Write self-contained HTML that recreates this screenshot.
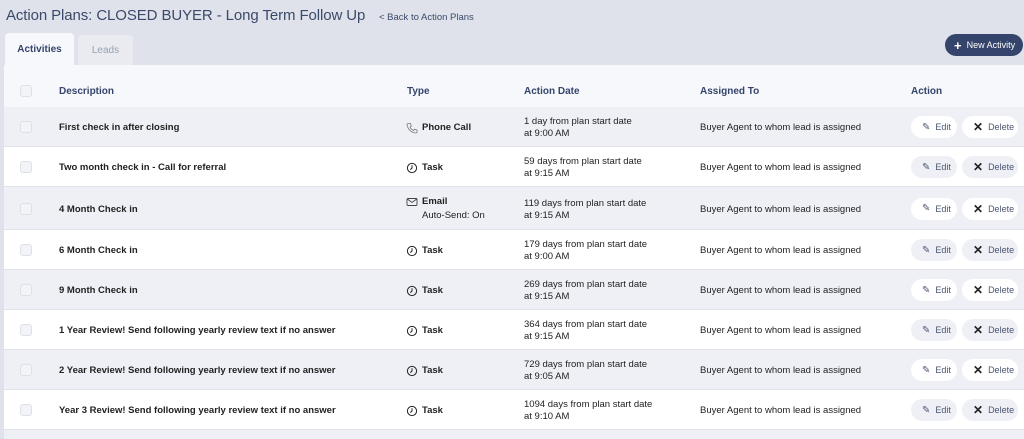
<!DOCTYPE html>
<html><head><style>
*{box-sizing:border-box;margin:0;padding:0}
body{width:1024px;height:439px;overflow:hidden;background:#dfe2ea;font-family:"Liberation Sans",sans-serif;position:relative;color:#222}
.title{position:absolute;left:6px;top:7px;font-size:15px;color:#3b4a6b;letter-spacing:-0.1px}
.back{position:absolute;left:379px;top:12px;font-size:9.5px;color:#3b4a6b}
.tab{position:absolute;top:33px;height:32px;font-size:10px;font-weight:bold;display:flex;align-items:center;justify-content:center;border-radius:4px 4px 0 0}
.new{position:absolute;left:945px;top:34px;width:78px;height:22px;background:#34446a;border-radius:11px;color:#fff;font-size:9px;display:flex;align-items:center;padding-left:9px;white-space:nowrap}
.tbl{position:absolute;left:4px;top:65px;width:1020px;height:374px;background:#eef0f6}
.row{position:absolute;left:0;width:1020px;border-bottom:1px solid #e0e3ea;font-size:9.5px}
.row>*{position:absolute}
.cb{left:16px;width:12px;height:12px;border:1px solid #dde0e7;border-radius:3px;background:#f3f4f8}
.hd{font-weight:bold;color:#34446a;font-size:10px}
.desc{left:55px;font-weight:bold}
.ic{left:402px;width:12px;height:12px}
.ty{left:418px;font-weight:bold}
.dt{left:520px;line-height:12px}
.as{left:696px}
.btn{height:22px;border-radius:11px;font-size:9px;color:#4a5570;display:flex;align-items:center;gap:5px;padding-left:11px}
</style></head><body>
<div class="title">Action Plans: CLOSED BUYER - Long Term Follow Up</div>
<div class="back">&lt; Back to Action Plans</div>
<div class="tab" style="left:5px;width:69px;background:#f7f8fc;color:#34446a">Activities</div>
<div class="tab" style="left:78px;width:55px;background:#e9ebf0;color:#98a0b0;top:35px;height:30px;font-weight:normal">Leads</div>
<div class="new"><span style="font-size:13px;margin-right:5px;font-weight:bold">+</span>New Activity</div>
<div class="tbl">
<div class="row" style="top:0;height:42px;background:#f7f8fc;border:none">
<div class="cb" style="top:20px"></div>
<div class="hd" style="left:55px;top:21px">Description</div>
<div class="hd" style="left:403px;top:21px">Type</div>
<div class="hd" style="left:520px;top:21px">Action Date</div>
<div class="hd" style="left:696px;top:21px">Assigned To</div>
<div class="hd" style="left:907px;top:21px">Action</div>
</div>
<div id="rows"></div>
</div>
<script>
var d=[["First check in after closing","Phone Call","1 day from plan start date","at 9:00 AM",40],
["Two month check in - Call for referral","Task","59 days from plan start date","at 9:15 AM",40],
["4 Month Check in","Email","119 days from plan start date","at 9:15 AM",43],
["6 Month Check in","Task","179 days from plan start date","at 9:00 AM",40],
["9 Month Check in","Task","269 days from plan start date","at 9:15 AM",40],
["1 Year Review! Send following yearly review text if no answer","Task","364 days from plan start date","at 9:15 AM",40],
["2 Year Review! Send following yearly review text if no answer","Task","729 days from plan start date","at 9:05 AM",40],
["Year 3 Review! Send following yearly review text if no answer","Task","1094 days from plan start date","at 9:10 AM",40]];
var y=42,h="";
var icons={"Task":'<svg class="ic" viewBox="0 0 12 12"><circle cx="6" cy="6" r="4.6" fill="none" stroke="#222" stroke-width="1"/><path d="M6 3.3V6L4.3 7.6" fill="none" stroke="#222" stroke-width="1"/></svg>',
"Phone Call":'<svg class="ic" viewBox="0 0 12 12"><path d="M2.5 1.5L4.5 1.5 5.3 4 4 5C4.8 6.8 5.8 7.8 7.5 8.5L8.5 7.2 11 8V10C11 10.8 10.3 11 9.5 11 5 10.5 1.5 7 1 2.5 1 1.8 1.5 1.5 2.5 1.5Z" fill="none" stroke="#777" stroke-width=".8"/></svg>',
"Email":'<svg class="ic" viewBox="0 0 12 12"><rect x="1" y="2.5" width="10" height="7" rx="1" fill="none" stroke="#444" stroke-width=".9"/><path d="M1.3 3L6 6.5 10.7 3" fill="none" stroke="#444" stroke-width=".9"/></svg>'};
d.forEach(function(r,i){var H=r[4],odd=i%2==0,bg=odd?"#eef0f6":"#fff",bb=odd?"#fff":"#eef0f6",c=H/2+1;
var ty=r[1]=="Email"?icons.Email.replace('class="ic"','class="ic" style="top:'+(c-14)+'px"')+'<div class="ty" style="top:'+(c-14)+'px">Email</div><div style="left:418px;top:'+(c)+'px">Auto-Send: On</div>'
:icons[r[1]].replace('class="ic"','class="ic" style="top:'+(c-6)+'px"')+'<div class="ty" style="top:'+(c-6)+'px">'+r[1]+'</div>';
h+='<div class="row" style="top:'+y+'px;height:'+H+'px;background:'+bg+'"><div class="cb" style="top:'+(c-7)+'px"></div><div class="desc" style="top:'+(c-6)+'px">'+r[0]+'</div>'+ty+
'<div class="dt" style="top:'+(c-12)+'px">'+r[2]+'<br>'+r[3]+'</div>'+
'<div class="as" style="top:'+(c-6)+'px">Buyer Agent to whom lead is assigned</div>'+
'<div class="btn" style="left:907px;top:'+(c-12)+'px;width:46px;background:'+bb+'"><span style="font-size:10px">✎</span>Edit</div>'+
'<div class="btn" style="left:958px;top:'+(c-12)+'px;width:56px;background:'+bb+'"><b style="font-size:12px;color:#222">✕</b>Delete</div></div>';
y+=H;});
document.getElementById("rows").innerHTML=h;
</script>
</body></html>
